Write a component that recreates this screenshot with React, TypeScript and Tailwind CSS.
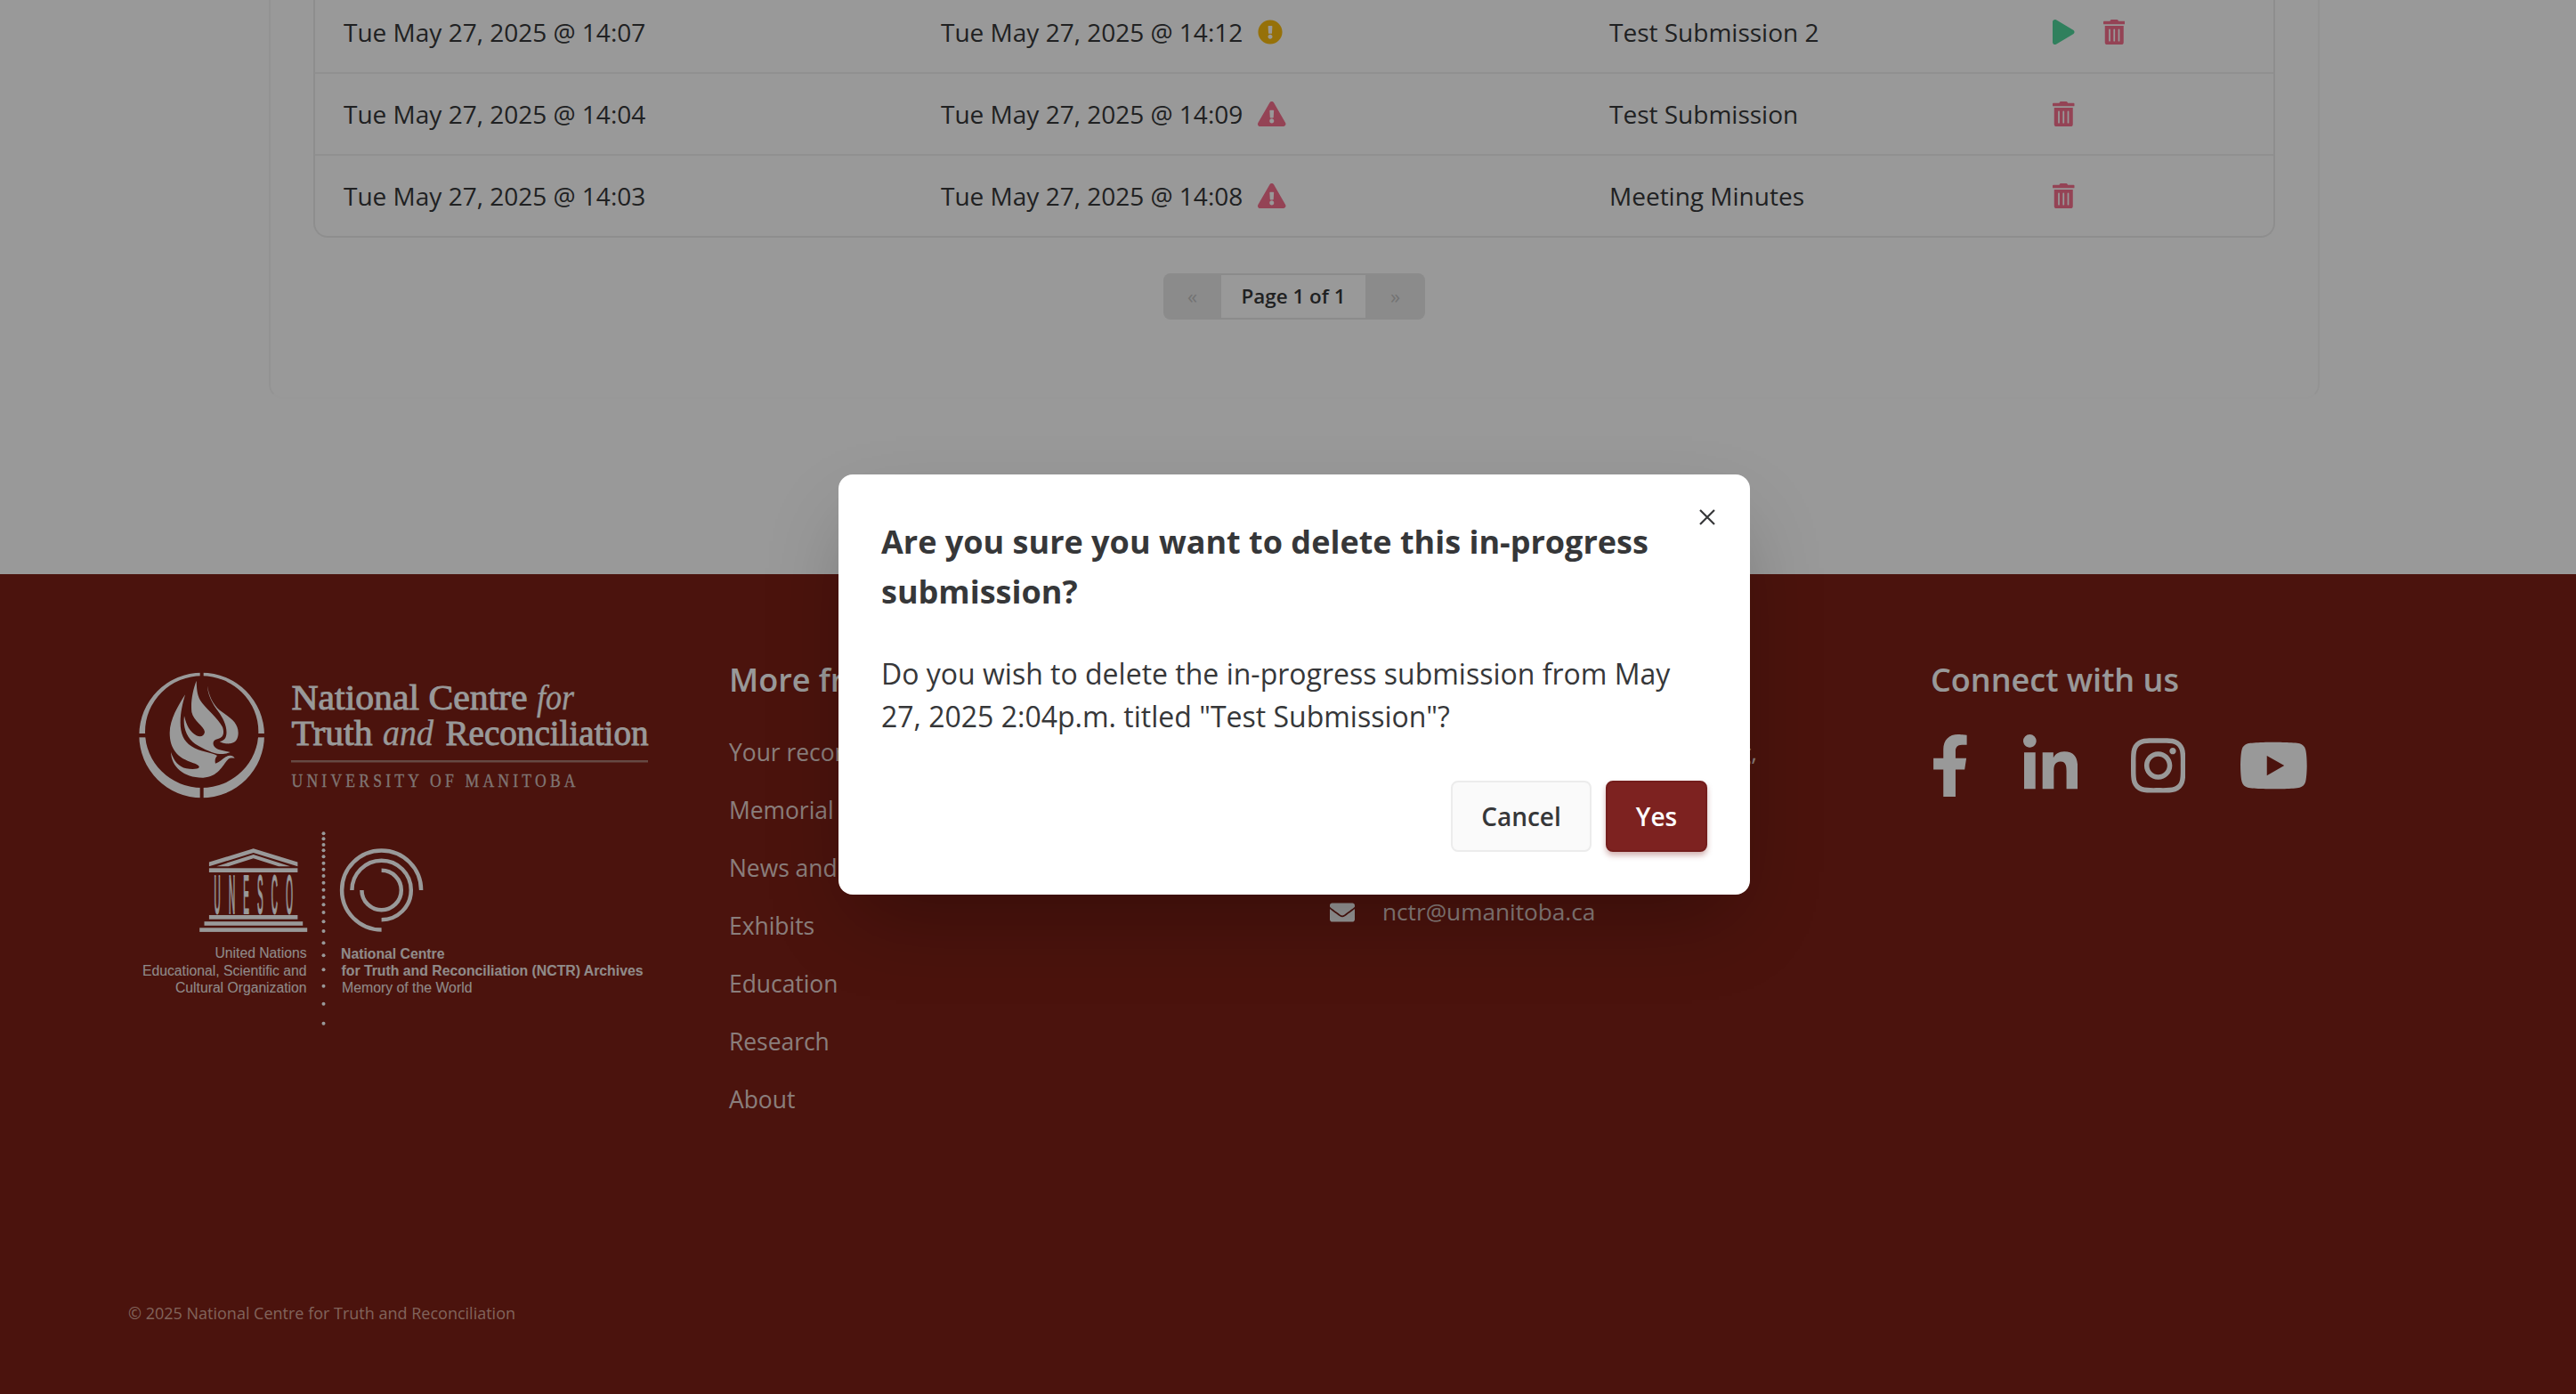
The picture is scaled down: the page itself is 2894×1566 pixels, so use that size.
import type { ReactNode } from "react";
import {
  FaEnvelope,
  FaExclamationCircle,
  FaExclamationTriangle,
  FaFacebookF,
  FaInstagram,
  FaLinkedinIn,
  FaPlay,
  FaTrashAlt,
  FaYoutube,
} from "react-icons/fa";

type Submission = {
  created: string;
  expires: string;
  title: string;
  active: boolean;
};

const submissions: Submission[] = [
  { created: "Tue May 27, 2025 @ 14:07", expires: "Tue May 27, 2025 @ 14:12", title: "Test Submission 2", active: true },
  { created: "Tue May 27, 2025 @ 14:04", expires: "Tue May 27, 2025 @ 14:09", title: "Test Submission", active: false },
  { created: "Tue May 27, 2025 @ 14:03", expires: "Tue May 27, 2025 @ 14:08", title: "Meeting Minutes", active: false },
];

const footerLinks = ["Your records", "Memorial", "News and events", "Exhibits", "Education", "Research", "About"];

function SubmissionTable() {
  return (
    <div className="rounded-b-2xl border-2 border-t-0 border-[#ededed]">
      {submissions.map((s) => (
        <div
          key={s.created}
          className="grid h-[92px] grid-cols-[671px_751px_498px_1fr] items-center border-b-2 border-[#f0f0f0] pl-8 text-[28px] last:h-[90px] last:border-b-0"
        >
          <span>{s.created}</span>
          <span className="flex items-center gap-[17px]">
            {s.expires}
            {s.active ? (
              <FaExclamationCircle className="h-7 w-7 text-[#fbbd10]" />
            ) : (
              <FaExclamationTriangle className="h-7 w-[31.5px] text-[#f7708e]" />
            )}
          </span>
          <span>{s.title}</span>
          <span className="flex items-center gap-8">
            {s.active && <FaPlay className="h-7 w-[24.5px] text-[#50d69c]" />}
            <FaTrashAlt className="h-7 w-[24.5px] text-[#f7708e]" />
          </span>
        </div>
      ))}
    </div>
  );
}

function Pagination() {
  return (
    <div className="flex h-[52px] w-[294px] overflow-hidden rounded-lg bg-[#e8e8e8] text-[22.4px] font-semibold">
      <span className="flex w-[65px] items-center justify-center font-normal text-[#c0c0c0]">«</span>
      <span className="my-[2px] flex w-[162px] items-center justify-center bg-white">Page 1 of 1</span>
      <span className="flex w-[67px] items-center justify-center font-normal text-[#c0c0c0]">»</span>
    </div>
  );
}

function CentreLogo() {
  return (
    <svg viewBox="150 745 590 160" className="h-[160px] w-[590px]" fill="#fff">
      <g transform="translate(150 745) scale(0.33333)">
        <mask id="ring-gaps">
          <rect width="480" height="480" fill="#fff" />
          <rect x="224" width="12" height="480" fill="#000" />
          <rect y="237" width="480" height="13" fill="#000" />
        </mask>
        <path
          mask="url(#ring-gaps)"
          fillRule="evenodd"
          d="M230 32a211 211 0 1 0 0 422a211 211 0 1 0 0-422zM230 43a191 188.500 0 1 1 0 377a191 188.500 0 1 1 0-377z"
        />
        <path d="M174 106C152 140 122 190 122 235C122 290 150 318 190 332C207 338 223 343 221 351C218 358 195 358 178 355C152 349 136 330 126 300C128 350 170 387 235 386C285 384 300 345 318 325C325 318 334 320 341 320C334 308 322 310 312 315C300 322 290 334 276 338C273 328 276 318 282 312C262 300 225 300 195 280C168 262 158 235 158 200C158 165 166 135 174 106Z" />
        <path d="M212 59C200 90 192 130 196 165C202 195 238 212 240 232C238 247 225 250 212 244C190 232 178 210 171 178C166 215 178 250 208 272C238 290 270 305 290 306C305 307 318 303 326 300C310 296 283 294 274 283C264 270 268 258 285 255C300 250 308 240 300 215C285 185 240 150 225 125C214 105 213 85 212 59Z" />
        <path d="M249 76C250 110 268 140 285 162C303 186 316 215 313 240C311 256 302 262 290 264C298 270 312 272 325 271C345 269 353 255 353 235C353 195 315 178 290 158C268 140 254 110 249 76Z" />
      </g>
      <g fontFamily="'Liberation Serif', serif" stroke="#fff">
        <text x="327.500" y="796.500" fontSize="40" textLength="265" lengthAdjust="spacingAndGlyphs" strokeWidth="0.9">National Centre</text>
        <text x="603" y="796.500" fontSize="40" fontStyle="italic" textLength="42" lengthAdjust="spacingAndGlyphs" strokeWidth="0.3">for</text>
        <text x="327.500" y="837.300" fontSize="40" textLength="91" lengthAdjust="spacingAndGlyphs" strokeWidth="0.9">Truth</text>
        <text x="430" y="837.300" fontSize="40" fontStyle="italic" textLength="57" lengthAdjust="spacingAndGlyphs" strokeWidth="0.300">and</text>
        <text x="500.500" y="837.300" fontSize="40" textLength="228" lengthAdjust="spacingAndGlyphs" strokeWidth="0.9">Reconciliation</text>
      </g>
      <rect x="327" y="854" width="401" height="2.500" fill="#ab7b70" />
      <text
        transform="translate(327.500 884.300) scale(0.86 1)"
        fontFamily="'Liberation Serif', serif"
        fontSize="20.500"
        textLength="371"
        fill="#d5c4c0"
        stroke="#d5c4c0"
        strokeWidth="0.3"
      >
        UNIVERSITY OF MANITOBA
      </text>
    </svg>
  );
}

const dots = [79, 97, 117, 136, 157, 179, 200, 222, 245, 269, 294, 319, 345, 376, 408, 448, 490, 538, 593, 653, 719];
const columns: [string, number][] = [
  ["U", 244.1],
  ["N", 260.5],
  ["E", 276.6],
  ["S", 292.3],
  ["C", 308.4],
  ["O", 325.2],
];

function UnescoLogo() {
  return (
    <svg viewBox="150 925 590 235" className="h-[235px] w-[590px]" fill="#fff">
      <path d="M234.900 968.500L284.700 953.300L334.400 968.500V973.300L284.700 958L234.900 973.300Z" />
      <path d="M243.300 973.300L284.700 960L326 973.300H313L284.700 964.300L256.500 973.300Z" />
      <rect x="234.900" y="975.300" width="99.500" height="4.700" />
      {columns.map(([letter, x]) => (
        <text
          key={letter}
          transform={`translate(${x} 1025.500) scale(0.16 1)`}
          textAnchor="middle"
          fontFamily="'Liberation Sans', sans-serif"
          fontSize="62"
          stroke="#fff"
          strokeWidth="1.3"
          className="[vector-effect:non-scaling-stroke]"
        >
          {letter}
        </text>
      ))}
      <rect x="234.900" y="1028" width="99.500" height="4.700" />
      <rect x="229.500" y="1035.200" width="110.700" height="4.600" />
      <rect x="224.200" y="1042.300" width="121" height="4.600" />
      {dots.map((d) => (
        <circle key={d} cx="363.500" cy={910 + d / 3} r="2" />
      ))}
      <g fill="none" stroke="#fff" strokeWidth="4.500">
        <path d="M473.100 1000A44.500 44.500 0 1 0 428.600 1044.500" />
        <path d="M395.400 1000A33.200 33.200 0 1 1 428.600 1033.200" />
        <path d="M428.600 977.800A22.200 22.200 0 1 1 406.400 1000" />
      </g>
      <g fontFamily="'Liberation Sans', sans-serif" fontSize="15.800" fill="#f0e8e6">
        <text x="241.500" y="1076" textLength="103" lengthAdjust="spacingAndGlyphs">United Nations</text>
        <text x="160" y="1096" textLength="184.500" lengthAdjust="spacingAndGlyphs">Educational, Scientific and</text>
        <text x="197" y="1115" textLength="147.500" lengthAdjust="spacingAndGlyphs">Cultural Organization</text>
        <text x="383" y="1077" fontWeight="700" textLength="116.500" lengthAdjust="spacingAndGlyphs">National Centre</text>
        <text x="383.500" y="1096" fontWeight="700" textLength="339" lengthAdjust="spacingAndGlyphs">for Truth and Reconciliation (NCTR) Archives</text>
        <text x="384" y="1115.300" textLength="146.500" lengthAdjust="spacingAndGlyphs">Memory of the World</text>
      </g>
    </svg>
  );
}

function FooterHeading({ children }: { children: ReactNode }) {
  return <h2 className="mb-[22px] h-[54px] text-4xl/[54px] font-semibold text-white">{children}</h2>;
}

function Footer() {
  return (
    <footer className="flex h-[921px] flex-col bg-[#7d2016] px-36 text-[26.4px] text-[#e6d3cf]">
      <div className="grid grid-cols-[675px_675px_675px_1fr] pt-[92px]">
        <div className="flex flex-col gap-5 pl-1.5 pt-2">
          <CentreLogo />
          <UnescoLogo />
        </div>
        <nav>
          <FooterHeading>More from NCTR</FooterHeading>
          <ul>
            {footerLinks.map((link) => (
              <li key={link} className="flex h-[65px] items-center">{link}</li>
            ))}
          </ul>
        </nav>
        <address className="pt-[76px] text-[26.2px] not-italic">
          <p className="mb-[114px] flex h-[65px] w-[480px] items-center justify-end whitespace-nowrap">177 Dysart Road, Winnipeg,</p>
          <p className="flex h-[65px] items-center gap-[31px]">
            <FaEnvelope className="size-7 text-white" />
            nctr@umanitoba.ca
          </p>
        </address>
        <div>
          <FooterHeading>Connect with us</FooterHeading>
          <div className="flex gap-[60px] pt-3 text-white">
            <FaFacebookF className="h-[70px] w-[43.75px]" />
            <FaLinkedinIn className="h-[70px] w-[61.25px]" />
            <FaInstagram className="h-[70px] w-[61.25px]" />
            <FaYoutube className="h-[70px] w-[78.75px]" />
          </div>
        </div>
      </div>
      <p className="mt-auto mb-[77px] text-lg/[27px] text-[#d8a598]">© 2025 National Centre for Truth and Reconciliation</p>
    </footer>
  );
}

function ConfirmDialog() {
  return (
    <div
      role="dialog"
      aria-modal="true"
      className="absolute left-[942px] top-[533px] flex w-[1024px] flex-col rounded-2xl bg-white p-12 text-[#363739] shadow-[0_40px_90px_-20px_rgba(0,0,0,0.28)]"
    >
      <button className="absolute right-10 top-10 flex size-4 items-center justify-center" aria-label="Close">
        <svg viewBox="0 0 18 18" className="size-[18px] shrink-0" stroke="currentColor" strokeWidth="2.200" fill="none">
          <path d="M1 1l16 16M17 1L1 17" />
        </svg>
      </button>
      <h3 className="text-4xl/[56px] font-bold">Are you sure you want to delete this in-progress submission?</h3>
      <p className="mt-10 text-[32px]/[48px]">
        Do you wish to delete the in-progress submission from May 27, 2025 2:04p.m. titled "Test Submission"?
      </p>
      <div className="mt-12 flex justify-end gap-4 text-[28px] font-semibold">
        <button className="h-20 w-[158px] rounded-lg border-2 border-[#ececec] bg-[#fafafa]">Cancel</button>
        <button className="h-20 w-[114px] rounded-lg border-2 border-[#741d1c] bg-[#7d2220] text-white shadow-[0_4px_6px_rgba(125,34,32,0.35)]">
          Yes
        </button>
      </div>
    </div>
  );
}

export default function App() {
  return (
    <div className="relative h-[1566px] w-[2894px] overflow-hidden bg-white font-['Open_Sans',sans-serif] text-[#363739]">
      <div className="flex h-[645px] flex-col items-center">
        <main className="-mt-[9px] mr-[-14px] flex h-[457px] w-[2304px] flex-col rounded-b-2xl border-2 border-t-0 border-[#f6f6f6] border-b-[#fdfdfd] px-12">
          <SubmissionTable />
          <div className="mt-10 flex justify-center">
            <Pagination />
          </div>
        </main>
      </div>
      <Footer />
      <div className="absolute inset-0 bg-black/40" />
      <ConfirmDialog />
    </div>
  );
}
